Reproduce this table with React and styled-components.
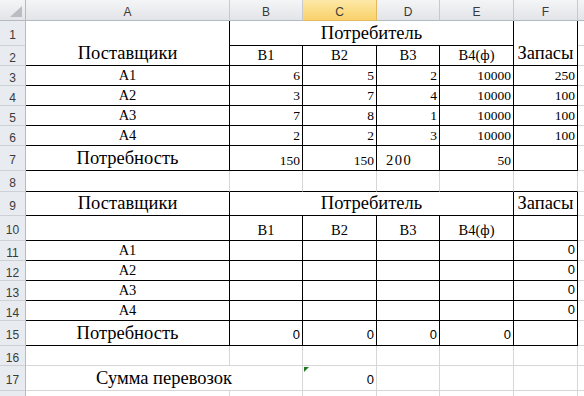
import React from 'react'
import styled, { createGlobalStyle, css } from 'styled-components'

const GRID = '#d6d6d6'
const COLS = ['A', 'B', 'C', 'D', 'E', 'F', 'G']
const ROW_HEIGHTS = [25, 20, 20, 20, 20, 20, 25, 21, 24, 25, 20, 20, 20, 20, 25, 20, 25, 20]

const GlobalStyle = createGlobalStyle`
  html, body {
    margin: 0;
    padding: 0;
    background: #fff;
    overflow: hidden;
  }
`

const boxed = { br: true, bb: true }
const supply = [
  [6, 5, 2, 10000, 250],
  [3, 7, 4, 10000, 100],
  [7, 8, 1, 10000, 100],
  [2, 2, 3, 10000, 100]
]
const consumers = ['В1', 'В2', 'В3', 'В4(ф)']

// every cell of the visible sheet, excel coordinates
const buildCells = () => {
  const cells = []
  const add = (c, r, opts = {}) => cells.push({ c, r, ...opts })

  // first table
  add('A', 1, { rs: 2, t: 'Поставщики', f: 'title', ...boxed })
  add('B', 1, { cs: 4, t: 'Потребитель', f: 'title', ...boxed })
  add('F', 1, { rs: 2, t: 'Запасы', f: 'title', ...boxed })
  consumers.forEach((t, i) => add('BCDE'[i], 2, { t, f: 'label', ...boxed }))
  supply.forEach((vals, i) => {
    add('A', 3 + i, { t: `А${i + 1}`, f: 'label', ...boxed })
    vals.forEach((v, j) => add('BCDEF'[j], 3 + i, { t: v, a: 'right', ...boxed }))
  })
  add('A', 7, { t: 'Потребность', f: 'title', ...boxed })
  add('B', 7, { t: 150, a: 'right', ...boxed })
  add('C', 7, { t: 150, a: 'right', ...boxed })
  add('D', 7, { t: 200, a: 'left', indent: 9, f: 'wide', ...boxed })
  add('E', 7, { t: 50, a: 'right', ...boxed })
  add('F', 7, { ...boxed })
  'ABCDEF'.split('').forEach(c => add(c, 8, { bb: true }))

  // second table
  add('A', 9, { t: 'Поставщики', f: 'title', ...boxed })
  add('B', 9, { cs: 4, t: 'Потребитель', f: 'title', ...boxed })
  add('F', 9, { t: 'Запасы', f: 'title', ...boxed })
  add('A', 10, { ...boxed })
  consumers.forEach((t, i) => add('BCDE'[i], 10, { t, f: 'label', ...boxed }))
  add('F', 10, { ...boxed })
  for (let i = 0; i < 4; i++) {
    add('A', 11 + i, { t: `А${i + 1}`, f: 'label', ...boxed })
    'BCDE'.split('').forEach(c => add(c, 11 + i, { ...boxed }))
    add('F', 11 + i, { t: 0, a: 'right', f: 'calc', ...boxed })
  }
  add('A', 15, { t: 'Потребность', f: 'title', ...boxed })
  'BCDE'.split('').forEach(c => add(c, 15, { t: 0, a: 'right', f: 'calc', ...boxed }))
  add('F', 15, { ...boxed })

  // below the tables
  'ABCDEF'.split('').forEach(c => add(c, 16))
  add('A', 17, { cs: 2, t: 'Сумма перевозок', f: 'title' })
  add('C', 17, { t: 0, a: 'right', f: 'calc', error: true })
  'DEF'.split('').forEach(c => add(c, 17))
  'ABCDEF'.split('').forEach(c => add(c, 18))
  ROW_HEIGHTS.forEach((_, i) => add('G', i + 1))
  return cells
}

const CELLS = buildCells()

export default function App() {
  return (
    <>
      <GlobalStyle />
      <Viewport>
        <Sheet>
          <Corner>
            <svg width="12" height="11" viewBox="0 0 12 11">
              <polygon points="12,0 12,11 0,11" fill="#b9bdc2" />
            </svg>
          </Corner>
          {COLS.map(c => (
            <ColHead key={c} $active={c === 'C'}>{c}</ColHead>
          ))}
          {ROW_HEIGHTS.map((_, i) => (
            <RowHead key={i} $row={i + 2}>{i + 1}</RowHead>
          ))}
          {CELLS.map(cell => (
            <Cell
              key={cell.c + cell.r}
              $col={COLS.indexOf(cell.c) + 2}
              $row={cell.r + 1}
              $cs={cell.cs}
              $rs={cell.rs}
              $align={cell.a}
              $indent={cell.indent}
              $font={cell.f}
              $br={cell.br}
              $bb={cell.bb}
            >
              {cell.error && <ErrorMark />}
              {cell.t}
            </Cell>
          ))}
        </Sheet>
      </Viewport>
    </>
  )
}

const Viewport = styled.div`
  width: 584px;
  height: 396px;
  overflow: hidden;
  background: #fff;
`

const Sheet = styled.div`
  display: grid;
  grid-template-columns: 26px 204px 73px 74px 63px 74px 64px 64px;
  grid-template-rows: 21px ${ROW_HEIGHTS.map(h => `${h}px`).join(' ')};
  width: max-content;
`

const headFont = css`
  font-family: "Liberation Sans", Arial, sans-serif;
  font-size: 12px;
  color: #3a3a3a;
`

const Corner = styled.div`
  grid-column: 1;
  grid-row: 1;
  box-sizing: border-box;
  display: flex;
  align-items: flex-end;
  justify-content: flex-end;
  padding: 0 3px 3px 0;
  background: linear-gradient(#f4f5f7, #e2e4e7);
  border-right: 1px solid #b4bac2;
  border-bottom: 1px solid #b4bac2;
`

const ColHead = styled.div`
  grid-row: 1;
  box-sizing: border-box;
  display: flex;
  align-items: center;
  justify-content: center;
  padding-top: 3px;
  ${headFont}
  background: ${({ $active }) => $active
    ? 'linear-gradient(#fde8a6, #f9d26a)'
    : 'linear-gradient(#f4f5f7, #e2e4e7)'};
  border-right: 1px solid ${({ $active }) => $active ? '#e2b860' : '#c6cad0'};
  border-bottom: 1px solid ${({ $active }) => $active ? '#e2b860' : '#b4bac2'};
`

const RowHead = styled.div`
  grid-column: 1;
  grid-row: ${({ $row }) => $row};
  box-sizing: border-box;
  display: flex;
  align-items: center;
  justify-content: center;
  padding-top: 4px;
  ${headFont}
  background: #e8ebef;
  border-right: 1px solid #b4bac2;
  border-bottom: 1px solid #cdd1d6;
`

const cellFonts = {
  title: css`font-family: "Liberation Serif", "Times New Roman", serif; font-size: 18.5px;`,
  label: css`font-family: "Liberation Serif", "Times New Roman", serif; font-size: 14.5px;`,
  num: css`font-family: "Liberation Serif", "Times New Roman", serif; font-size: 13.5px;`,
  wide: css`font-family: "Liberation Serif", "Times New Roman", serif; font-size: 14.5px; letter-spacing: 1.5px;`,
  calc: css`font-family: "Liberation Sans", Arial, sans-serif; font-size: 13px; padding-bottom: 2px;`
}

const justify = { right: 'flex-end', left: 'flex-start' }

const Cell = styled.div`
  grid-column: ${({ $col, $cs }) => `${$col} / span ${$cs || 1}`};
  grid-row: ${({ $row, $rs }) => `${$row} / span ${$rs || 1}`};
  position: relative;
  box-sizing: border-box;
  display: flex;
  align-items: flex-end;
  justify-content: ${({ $align }) => justify[$align] || 'center'};
  padding: 0 2px 1px ${({ $indent }) => $indent || 2}px;
  border-right: 1px solid ${({ $br }) => $br ? '#000' : GRID};
  border-bottom: 1px solid ${({ $bb }) => $bb ? '#000' : GRID};
  color: #000;
  line-height: 1.15;
  white-space: nowrap;
  ${({ $font }) => cellFonts[$font || 'num']}
`

const ErrorMark = styled.span`
  position: absolute;
  top: 1px;
  left: 1px;
  width: 0;
  height: 0;
  border-top: 5px solid #1e7b22;
  border-right: 5px solid transparent;
`
